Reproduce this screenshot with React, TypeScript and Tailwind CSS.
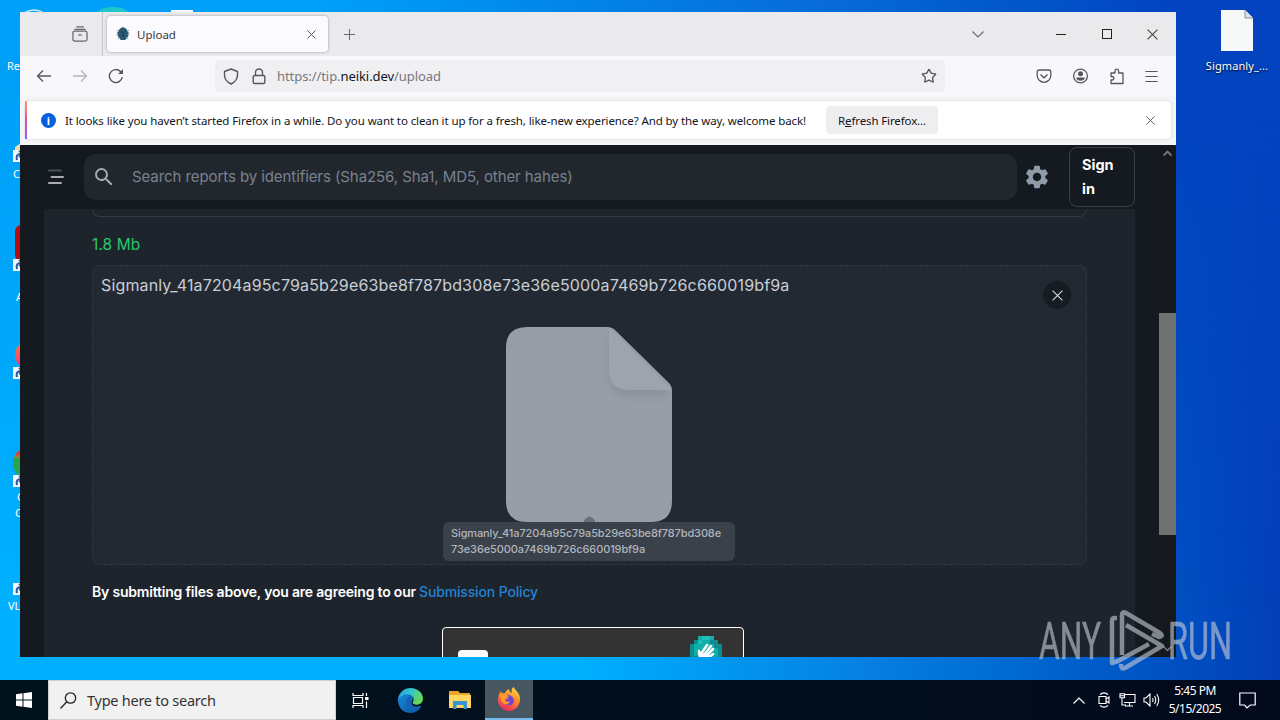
import { MdSearch, MdSettings } from "react-icons/md";
import { Menu, Star } from "lucide-react";

const FILE_NAME = "Sigmanly_41a7204a95c79a5b29e63be8f787bd308e73e36e5000a7469b726c660019bf9a";

function Cross({ className = "" }: { className?: string }) {
    return (
        <svg viewBox="0 0 10 10" className={className} fill="none" stroke="currentColor">
            <path d="M.5.5l9 9M9.5.5l-9 9" />
        </svg>
    );
}

function ShortcutArrow() {
    return (
        <svg width="11" height="12" viewBox="0 0 11 12">
            <path fill="#f4f6fa" d="M0 0h11v12H0z" />
            <path d="M4 10c-1-4 0-6 4-6M6 1l4 3-4 3" fill="none" stroke="#2a55a8" strokeWidth="2" />
        </svg>
    );
}

function DesktopIcons() {
    return (
        <div className="text-white text-[11px] leading-[14px]">
            <svg className="absolute left-0 top-0" width="220" height="20">
                <ellipse cx="34" cy="19" rx="13" ry="9" fill="none" stroke="#c8e8fb" strokeWidth="1.5" />
                <ellipse cx="113" cy="18" rx="19" ry="11" fill="#20c5c8" />
                <path d="M171 10h22v6h-22z" fill="#f8f8f8" />
            </svg>
            <span className="absolute left-[7px] top-[59px]">Re</span>
            <svg className="absolute left-[13px] top-[142px]" width="12" height="10">
                <path d="M2 5l6-4v9H2z" fill="#f5d9b0" />
            </svg>
            <div className="absolute left-[13px] top-[150px]"><ShortcutArrow /></div>
            <span className="absolute left-[13px] top-[167px]">C</span>
            <div className="absolute left-[15px] top-[225px] w-10 h-9 rounded-md bg-[#b01010]" />
            <div className="absolute left-[13px] top-[259px]"><ShortcutArrow /></div>
            <span className="absolute left-[16px] top-[290px]">A</span>
            <div className="absolute left-[15px] top-[341px] w-8 h-7 rounded-full bg-linear-to-b from-[#ff7a26] to-[#e9267c]" />
            <div className="absolute left-[13px] top-[367px]"><ShortcutArrow /></div>
            <div className="absolute left-[13px] top-[447px] w-8 h-8 rounded-full bg-linear-to-b from-[#e23b30] from-25% to-[#2ba24c] to-35%" />
            <div className="absolute left-[13px] top-[475px]"><ShortcutArrow /></div>
            <span className="absolute left-[17px] top-[490px]">G</span>
            <span className="absolute left-[15px] top-[506px]">C</span>
            <div className="absolute left-[13px] top-[583px]"><ShortcutArrow /></div>
            <span className="absolute left-[8px] top-[599px]">VL</span>
            <div className="absolute left-[1197px] top-[9px] w-20 flex flex-col items-center">
                <svg width="32" height="43" viewBox="0 0 32 43">
                    <path d="M0 1h24l8 8v33H0z" fill="#f7f8f8" />
                    <path d="M24 1v8h8" fill="#e0e3e6" stroke="#8a929c" />
                </svg>
                <span className="mt-[7px] whitespace-nowrap tracking-[0.1px] [text-shadow:0_1px_2px_#000]">Sigmanly_...</span>
            </div>
        </div>
    );
}

function TabStrip() {
    return (
        <div className="h-11 shrink-0 bg-[#eaeaed] flex items-center text-[#45454c]">
            <div className="w-[83px] h-full border-r border-[#c6c6cb] flex items-center justify-end pr-[14px]">
                <svg width="16" height="16" viewBox="0 0 17 17" fill="none" stroke="#66666d" strokeWidth="1.3">
                    <path d="M4.500 1h8M2.500 3.500h12" />
                    <rect x="1" y="5.500" width="15" height="10.500" rx="2" />
                    <path d="M6.500 9.500h4" />
                </svg>
            </div>
            <div className="ml-[4px] w-[221px] h-9 rounded-[4px] bg-[#fbfbfd] shadow-[0_0_3px_rgba(0,0,0,0.35)] flex items-center pl-[9px] pr-3">
                <svg width="14" height="14" viewBox="0 0 15 15">
                    <path d="M7.500 0l3.500 2 2.500 4-.5 4-3 4H5l-3-4-.5-4L4 2z" fill="#2a5a74" />
                    <path d="M1 3l2 2M14 3l-2 2M.5 8h2M14.500 8h-2M2 13l2-2M13 13l-2-2" stroke="#7b9bab" />
                    <path d="M5 4l2.500 3L10 4M7.500 7v4" stroke="#16384e" fill="none" />
                </svg>
                <span className="ml-[7px] text-[11.500px] text-[#38383d] grow relative top-px">Upload</span>
                <Cross className="w-[9px] h-[9px]" />
            </div>
            <svg className="ml-4" width="11" height="11" viewBox="0 0 11 11" stroke="#6a6a70">
                <path d="M5.500 0v11M0 5.500h11" />
            </svg>
            <svg className="ml-[617px]" width="12" height="7" viewBox="0 0 12 7" fill="none" stroke="#6a6a70" strokeWidth="1.200">
                <path d="M.5.5L6 6 11.500.5" />
            </svg>
            <div className="ml-[72px] w-[10px] h-px bg-[#222]" />
            <div className="ml-[36px] w-[10px] h-[10px] border border-[#222]" />
            <Cross className="ml-[35px] w-[11px] h-[11px] text-[#444]" />
        </div>
    );
}

function NavBar() {
    return (
        <div className="h-10 shrink-0 bg-[#f8f8fb] flex items-center text-[#56565d]">
            <svg className="ml-4" width="16" height="16" viewBox="0 0 16 16" fill="none" stroke="currentColor" strokeWidth="1.300">
                <path d="M15 8H1.500M7 2.500L1.500 8 7 13.500" />
            </svg>
            <svg className="ml-5" width="16" height="16" viewBox="0 0 16 16" fill="none" stroke="#b5b5ba" strokeWidth="1.300">
                <path d="M1 8h13.500M9 2.500L14.500 8 9 13.500" />
            </svg>
            <svg className="ml-5" width="16" height="16" viewBox="0 0 16 16" fill="none" stroke="currentColor" strokeWidth="1.400">
                <path d="M14.300 9A6.500 6.500 0 1 1 12.500 3.500L14 5" />
                <path d="M15 1v5h-5z" fill="currentColor" stroke="none" />
            </svg>
            <div className="ml-[91px] w-[730px] h-8 rounded bg-[#f0f0f3] flex items-center px-2">
                <svg width="16" height="17" viewBox="0 0 16 17" fill="none" stroke="currentColor" strokeWidth="1.400">
                    <path d="M8 1l6.500 2.500V7c0 4-2.500 7-6.500 9C4 14 1.500 11 1.500 7V3.500z" strokeLinejoin="round" />
                </svg>
                <svg className="ml-3" width="16" height="17" viewBox="0 0 16 17" fill="none" stroke="currentColor" strokeWidth="1.400">
                    <rect x="2.200" y="7.500" width="11.600" height="8" rx="1.500" />
                    <path d="M4.500 7.500V4.500a3.500 3.500 0 0 1 7 0v3" />
                </svg>
                <span className="ml-[10px] text-[13px] tracking-[-0.07px] text-[#77777e] whitespace-nowrap grow relative top-px">
                    https://tip.<span className="text-[#15141a]">neiki.dev</span>/upload
                </span>
                <Star className="w-4 h-4" strokeWidth={2} />
            </div>
            <svg className="ml-[91px]" width="16" height="16" viewBox="0 0 16 16" fill="none" stroke="currentColor" strokeWidth="1.300">
                <path d="M3 2h10a1.800 1.800 0 0 1 1.800 1.800V7.500a6.800 6.800 0 0 1-13.600 0V3.800A1.800 1.800 0 0 1 3 2z" />
                <path d="M4.500 6.500L8 9.800l3.500-3.300" />
            </svg>
            <svg className="ml-5" width="17" height="16" viewBox="0 0 16 16">
                <circle cx="8" cy="8" r="6.900" fill="none" stroke="currentColor" strokeWidth="1.300" />
                <circle cx="8" cy="5.800" r="2.500" fill="currentColor" />
                <path d="M3.500 9.500h9c-.5 2-2.200 3.300-4.500 3.300S4 11.500 3.500 9.500z" fill="currentColor" />
            </svg>
            <svg className="ml-5" width="16" height="17" viewBox="0 0 16 17" fill="none" stroke="currentColor" strokeWidth="1.300" strokeLinejoin="round">
                <path d="M2 5h4V3a1.800 1.800 0 0 1 3.600 0v2H14v10.500H2V12h1.500a1.800 1.800 0 0 0 0-3.500H2z" />
            </svg>
            <Menu className="ml-[18px] w-[17px] h-[17px]" strokeWidth={1.6} />
        </div>
    );
}

function NotificationBar() {
    return (
        <div className="h-[49px] shrink-0 bg-[#f5f5f7] pt-[5px] px-[5px]">
            <div className="h-[38px] bg-white rounded-[4px] shadow-[0_0_2px_rgba(0,0,0,0.2)] flex items-center relative text-[11.500px] text-[#15141a]">
                <div className="w-[2px] h-full bg-linear-to-b from-[#ff9a56] via-[#e04fa0] to-[#9059ff]" />
                <div className="ml-[14px] w-[15px] h-[15px] rounded-full bg-[#0560df] text-white text-[11px] leading-[15px] font-bold text-center">i</div>
                <span className="ml-[9px] w-[742px] whitespace-nowrap tracking-[-0.1px] relative top-px">
                    It looks like you haven’t started Firefox in a while. Do you want to clean it up for a fresh, like-new experience? And by the way, welcome back!
                </span>
                <div className="ml-[19px] w-[112px] h-7 rounded bg-[#eeeef0] flex items-center justify-center tracking-[-0.12px] whitespace-nowrap pt-[2px]">
                    R<span className="underline">e</span>fresh Firefox...
                </div>
                <Cross className="absolute right-[16px] w-[9px] h-[9px] text-[#55555c]" />
            </div>
        </div>
    );
}

function SiteHeader() {
    return (
        <div className="absolute inset-x-0 top-0 h-16 bg-[#151a21] flex items-center">
            <svg className="ml-[27px]" width="18" height="16" viewBox="0 0 18 16" strokeWidth="2" strokeLinecap="round">
                <path d="M2 1.500h12" stroke="#4b5158" />
                <path d="M4.500 8H16M2 14h12" stroke="#a9adb2" />
            </svg>
            <div className="ml-[19px] w-[933px] h-[46px] rounded-xl bg-[#22272e] flex items-center">
                <MdSearch className="ml-[8px] w-6 h-6 text-[#a5acb4]" />
                <span className="ml-[16px] text-[15px] tracking-[-0.08px] text-[#79828e] whitespace-nowrap">
                    Search reports by identifiers (Sha256, Sha1, MD5, other hahes)
                </span>
            </div>
            <MdSettings className="ml-[6px] w-7 h-7 text-[#8f9ba8]" />
            <div className="ml-[18px] w-[66px] h-[60px] rounded-lg border border-[#3b4047] pl-3 pt-[5px] text-white text-[14.500px] leading-6 font-bold">
                Sign<br />in
            </div>
        </div>
    );
}

function UploadPreview() {
    return (
        <div className="mt-[9px] w-[995px] h-[300px] rounded-lg border border-dashed border-[#323944] bg-[#232933] relative">
            <p className="pl-2 pt-[7px] text-[16px] leading-6 text-[#c9ced5] whitespace-nowrap tracking-[0.145px]">{FILE_NAME}</p>
            <div className="absolute right-[15px] top-[15px] w-7 h-7 rounded-full bg-[#171c23] flex items-center justify-center text-[#d8dce0]">
                <Cross className="w-[11px] h-[11px]" />
            </div>
            <svg className="mt-[30px] ml-[413px]" width="166" height="195" viewBox="0 0 166 195">
                <defs>
                    <filter id="fold" x="-30%" y="-30%" width="160%" height="170%">
                        <feDropShadow dx="0" dy="6" stdDeviation="5" floodColor="#737b83" floodOpacity="0.4" />
                    </filter>
                    <clipPath id="page">
                        <path d="M21 0h80q5 0 8 3l54 53q3 3 3 8v110q0 21-21 21H21q-21 0-21-21V21Q0 0 21 0z" />
                    </clipPath>
                </defs>
                <g clipPath="url(#page)">
                    <path d="M0 0h166v195H0z" fill="#979ea6" />
                    <path d="M103 0v42q0 21 21 21h42z" fill="#9da4ac" filter="url(#fold)" />
                    <path d="M78 195v-2l4-3q1.500-1 3 0l4 3v2z" fill="#6a7079" />
                </g>
            </svg>
            <div className="absolute left-[350px] top-[256px] w-[292px] h-[39px] rounded-md bg-[#3b414b] px-2 pt-[3px] text-[11px] leading-4 text-[#b0b5bc] font-medium break-all tracking-[-0.12px]">
                {FILE_NAME}
            </div>
        </div>
    );
}

function Captcha() {
    return (
        <div className="mt-[24px] ml-[350px] w-[302px] h-[76px] rounded border border-white bg-[#333333] relative">
            <div className="absolute left-[15px] top-[22px] w-[30px] h-[30px] rounded bg-[#fafafa]" />
            <svg className="absolute left-[247px] top-[8px]" width="32" height="32" viewBox="0 0 32 32">
                <path d="M8 0h16v4h4v4h4v16h-4v4H4v-4H0V8h4V4h4z" fill="#0d8c90" />
                <path d="M8 0h16v4h-4v4h4v4h4v12H8v-4H4V8h4z" fill="#10adaa" />
                <path d="M12 0h8v4h-8zM8 4h4v4H8zM16 8h4v4h-4z" fill="#1fbeb6" />
                <g stroke="#fff" strokeWidth="2.500" strokeLinecap="round">
                    <path d="M10 20l-1-5M11 18l6-9M14 19l7-9M16 20l7-7M18 22l5-4" />
                </g>
                <path d="M8 16l4 1 8 2-2 8-8 3z" fill="#fff" />
            </svg>
        </div>
    );
}

function Website() {
    return (
        <div className="grow relative flex bg-[#151a20] overflow-hidden font-[Inter,sans-serif]">
            <div className="ml-6 w-[1091px] h-full bg-[#1e242c] pl-12 pt-16">
                <div className="w-[995px] h-[8px] rounded-b-lg border border-t-0 border-[#343b43]" />
                <p className="mt-[16px] h-[23px] text-[15.500px] leading-6 tracking-[0.1px] text-[#27c768]">1.8 Mb</p>
                <UploadPreview />
                <p className="mt-[16px] h-[22px] text-[14px] leading-[22px] font-semibold text-white whitespace-nowrap">
                    <span className="inline-block w-[327px] tracking-[-0.2px]">By submitting files above, you are agreeing to our</span>
                    <span className="font-medium tracking-[-0.15px] text-[#2483d5]">Submission Policy</span>
                </p>
                <Captcha />
            </div>
            <SiteHeader />
            <div className="absolute right-0 top-0 w-[17px] h-full bg-[#15191e]">
                <svg className="absolute left-[4px] top-[4px]" width="9" height="8" fill="none" stroke="#777b80" strokeWidth="1.800">
                    <path d="M.5 6.500l4-4 4 4" />
                </svg>
                <div className="mt-[168px] h-[222px] bg-[#707173]" />
                <svg className="absolute left-[4px] bottom-[4px]" width="9" height="8" fill="none" stroke="#777b80" strokeWidth="1.500">
                    <path d="M.5 1.500l4 4 4-4" />
                </svg>
            </div>
        </div>
    );
}

function Watermark() {
    return (
        <svg className="absolute left-[1030px] top-[600px]" width="220" height="78" viewBox="1030 600 220 78" opacity="0.62">
            <g fill="#c4cad4" stroke="#c4cad4" strokeWidth="0.600" fontFamily="Roboto, sans-serif" fontSize="51">
                <text x="1039" y="659" textLength="62" lengthAdjust="spacingAndGlyphs">ANY</text>
                <text x="1168" y="659" textLength="64" lengthAdjust="spacingAndGlyphs">RUN</text>
            </g>
            <g fill="none" stroke="#c4cad4" strokeWidth="4.500" strokeLinejoin="round">
                <path d="M1117 618h-2q-3 0-3 3v42l6-2 31-17" />
                <path d="M1122 655v-40q0-4 4-2l34 20q4 3-1 4l-7-3" />
                <path d="M1126 625l36 21-37 22q-4 2-4-4" />
            </g>
        </svg>
    );
}

function EdgeLogo() {
    return (
        <svg width="25" height="25" viewBox="0 0 24 24">
            <defs>
                <linearGradient id="edgeTop" x1="0" y1="0" x2="1" y2="0.400">
                    <stop offset="0" stopColor="#259ce0" />
                    <stop offset="0.500" stopColor="#31c6cf" />
                    <stop offset="1" stopColor="#66d657" />
                </linearGradient>
                <linearGradient id="edgeLow" x1="0" y1="0" x2="1" y2="1">
                    <stop offset="0" stopColor="#1590df" />
                    <stop offset="1" stopColor="#0d4f9f" />
                </linearGradient>
            </defs>
            <path fill="url(#edgeLow)" d="M0 11C1 7 5 5 9 5c4 0 6 3 5 6-2 3-1 7 4 7 2 0 3-.6 4.500-1.200C21 21 17 24 12 24 5 24 0 19 0 11z" />
            <path fill="#1463b4" d="M8 12c1-3 3-4 5-4-2 4-1 10 5 10 2 0 3-.6 4.500-1.200C20 21 17 22 14 22c-4 0-7-5-6-10z" />
            <path fill="url(#edgeTop)" d="M0 11C1 4 6 0 12 0c7 0 12 5 12 10 0 4-3 6-6 6-3 0-4-1-4-2 0-.7 1-1 1-3 0-3-3-5-6-5-4 0-7 2-9 5z" />
        </svg>
    );
}

function FirefoxLogo() {
    return (
        <svg width="24" height="24" viewBox="0 0 24 24">
            <defs>
                <linearGradient id="fox" x1="0.800" y1="0" x2="0.300" y2="1">
                    <stop offset="0" stopColor="#ffe23e" />
                    <stop offset="0.450" stopColor="#ff8b28" />
                    <stop offset="1" stopColor="#ed2566" />
                </linearGradient>
            </defs>
            <path fill="url(#fox)" d="M1 13c0-4 1-7 3-9l1 3c1-1 2-1 3-1 1-2 2-3 4-4 0 2 1 3 3 4-1-3 0-5 2-6 0 3 6 5 6 12 0 7-5 12-11 12S1 19 1 13z" />
            <path fill="#7542d8" d="M8 8c3-1 8 0 9 5 0 4-3 6-6 5-3-.6-4-3-3-5l4-2-4-1z" />
            <path fill="#ff9b2a" d="M3 7c3-2 6 0 9 2-1 2-4 1-4 4 1 2 4 2 5 1-1 4-6 4-8 1-1-2-2-5-2-8z" />
        </svg>
    );
}

function Taskbar() {
    return (
        <div className="h-10 bg-linear-to-r from-[#00131c] to-[#020a1c] flex items-center text-white">
            <div className="w-12 flex justify-center">
                <svg width="16" height="16" viewBox="0 0 16 16" fill="#fff">
                    <path d="M0 2.200L6.500 1.300v6.200H0zM7.500 1.200L16 0v7.500H7.500zM0 8.500h6.500v6.200L0 13.800zM7.500 8.500H16V16l-8.500-1.200z" />
                </svg>
            </div>
            <div className="w-72 h-full bg-[#f1f1f1] border border-[#cfd0d1] flex items-center text-[#333]">
                <svg className="ml-[11px]" width="17" height="17" viewBox="0 0 17 17" fill="none" stroke="#222" strokeWidth="1.300">
                    <circle cx="10.500" cy="6" r="5.200" />
                    <path d="M6.800 9.800L.5 16.500" />
                </svg>
                <span className="ml-[10px] text-[14.500px] tracking-[-0.25px] relative top-px">Type here to search</span>
            </div>
            <div className="w-12 flex justify-center">
                <svg width="17" height="17" viewBox="0 0 17 17" fill="none" stroke="#fff" strokeWidth="1.200">
                    <path d="M1 1v2.500h10V1M1 16v-2.500h10V16M1.500 5.500h9v6h-9zM14.500 1v3M14.500 9.500V16" />
                    <path d="M13 5h3.500v3H13z" fill="#fff" stroke="none" />
                </svg>
            </div>
            <div className="w-[53px] flex justify-center"><EdgeLogo /></div>
            <div className="w-12 flex justify-center pr-[3px]">
                <svg width="22" height="19" viewBox="0 0 22 19">
                    <path d="M0 0h9l2 2h10v5H0z" fill="#e9a426" />
                    <path d="M0 4h22v13H0z" fill="#ffd564" />
                    <path d="M4 10h14v8h-3.500v-4h-7v4H4z" fill="#3796d1" />
                </svg>
            </div>
            <div className="w-12 h-full bg-[#465762] border-b-2 border-[#76b9ed] flex items-center justify-center"><FirefoxLogo /></div>
            <div className="ml-auto flex items-center pr-6">
                <svg width="12" height="7" viewBox="0 0 12 7" fill="none" stroke="#fff" strokeWidth="1.200"><path d="M.5 6.500L6 1l5.500 5.500" /></svg>
                <svg className="ml-[13px]" width="12" height="16" viewBox="0 0 12 16" fill="none" stroke="#fff" strokeWidth="1.100">
                    <path d="M2 2.500Q6-.8 10 2.500M2 13.500q4 3.300 8 0M1 4.500h7v7H1zM8 7l3-2v6L8 9" />
                </svg>
                <svg className="ml-[9px]" width="17" height="14" viewBox="0 0 17 14" fill="none" stroke="#fff" strokeWidth="1.100">
                    <path d="M5 1.500h11v8H5M10.500 9.500V13M6 13h8M1 .8h4.500v4H1zM3 5v7h4M1 2.800h4" />
                </svg>
                <svg className="ml-[7px]" width="17" height="14" viewBox="0 0 17 14" fill="none" stroke="#fff" strokeWidth="1.100">
                    <path d="M1 5h2l4-4v12L3 9H1zM9.500 5q1.200 2 0 4M11.500 3q2.500 4 0 8M13.700 1q4 6 0 12" />
                </svg>
                <div className="ml-[5px] w-[60px] flex flex-col items-center text-[12px] leading-[18px] whitespace-nowrap tracking-[-0.5px]">
                    <span>5:45 PM</span>
                    <span>5/15/2025</span>
                </div>
                <svg className="ml-[14px]" width="17" height="17" viewBox="0 0 17 17" fill="none" stroke="#fff" strokeWidth="1.200">
                    <path d="M.8 1h15.400v12h-5L8 16l-2.500-3H.8z" />
                </svg>
            </div>
        </div>
    );
}

export default function App() {
    return (
        <div className="w-[1280px] h-[720px] overflow-hidden font-['Noto_Sans','Open_Sans',sans-serif]">
            <div className="relative h-[680px] bg-linear-to-r from-[#00b0fe] from-45% via-[#067fe0] via-68% to-[#043eb8]">
                {/* the wallpaper is darker towards the top */}
                <div className="absolute inset-0 bg-linear-to-r from-[#009ff8] from-25% via-[#086cd8] via-64% to-[#0343c0] to-92% mask-b-from-10% mask-b-to-90%" />
                <DesktopIcons />
                <div className="absolute left-[20px] top-[12px] w-[1156px] h-[645px] flex flex-col overflow-hidden">
                    <TabStrip />
                    <NavBar />
                    <NotificationBar />
                    <Website />
                </div>
                <Watermark />
            </div>
            <Taskbar />
        </div>
    );
}
